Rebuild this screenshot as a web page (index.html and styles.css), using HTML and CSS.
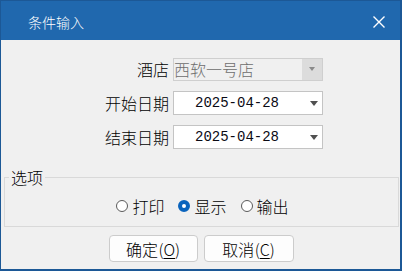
FILE: index.html
```html
<!DOCTYPE html>
<html lang="zh-CN">
<head>
    <meta charset="UTF-8">
    <meta name="viewport" content="width=device-width, initial-scale=1.0">
    <title>条件输入</title>
    <link rel="stylesheet" href="styles.css">
</head>
<body>
    <div class="window">
        <div class="titlebar">
            <span class="title">条件输入</span>
            <svg class="close" width="12" height="12" viewBox="0 0 12 12">
                <path d="M0.5 0.5 L11.5 11.5 M11.5 0.5 L0.5 11.5" stroke="#fff" stroke-width="1.4" fill="none"/>
            </svg>
        </div>

        <div class="content">
            <div class="field">
                <label class="field-label">酒店</label>
                <div class="combo disabled">
                    <span class="combo-text">西软一号店</span>
                    <span class="combo-btn"><i class="arrow"></i></span>
                </div>
            </div>
            <div class="field">
                <label class="field-label">开始日期</label>
                <div class="combo">
                    <span class="combo-text date">2025-04-28</span>
                    <span class="combo-btn"><i class="arrow"></i></span>
                </div>
            </div>
            <div class="field">
                <label class="field-label">结束日期</label>
                <div class="combo">
                    <span class="combo-text date">2025-04-28</span>
                    <span class="combo-btn"><i class="arrow"></i></span>
                </div>
            </div>

            <fieldset class="options">
                <legend>选项</legend>
                <div class="radios">
                    <label class="radio"><span class="dot"></span>打印</label>
                    <label class="radio checked"><span class="dot"></span>显示</label>
                    <label class="radio"><span class="dot"></span>输出</label>
                </div>
            </fieldset>

            <div class="buttons">
                <button class="btn btn-ok">确定 (<u>O</u>)</button>
                <button class="btn btn-cancel">取消 (<u>C</u>)</button>
            </div>
        </div>
    </div>
</body>
</html>
```

FILE: styles.css
```css
html, body {
    margin: 0;
    padding: 0;
}

body {
    width: 402px;
    height: 271px;
    overflow: hidden;
    font-family: "Noto Sans CJK SC", "Noto Sans", sans-serif;
    font-weight: 300;
    color: #000;
}

.window {
    box-sizing: border-box;
    width: 402px;
    height: 271px;
    border-style: solid;
    border-color: #1c5896;
    border-width: 1px 2px 2px 1px;
    background-color: #f0f0f0;
    display: flex;
    flex-direction: column;
}

.titlebar {
    height: 39px;
    background-color: #2068ae;
    display: flex;
    align-items: center;
    padding: 0 15px 0 27px;
    color: #fff;
}

.title {
    flex: 1;
    font-size: 14px;
    line-height: 16px;
    margin-top: 2px;
}

.close {
    display: block;
    margin-top: 2px;
}

.content {
    flex: 1;
    display: flex;
    flex-direction: column;
    padding-top: 17px;
}

.field {
    display: flex;
    align-items: center;
    height: 24px;
    margin-bottom: 9px;
}

.field + .field {
    margin-top: 1px;
}

.field-label {
    width: 168px;
    text-align: right;
    font-size: 16px;
    line-height: 20px;
    margin-right: 4px;
}

.combo {
    box-sizing: border-box;
    width: 150px;
    height: 24px;
    border: 1px solid #c4c4c4;
    background-color: #fff;
    display: flex;
    align-items: center;
}

.combo.disabled {
    height: 23px;
    background-color: #f0f0f0;
    border-color: #cfcfcf;
}

.combo-text {
    flex: 1;
    font-size: 16px;
    line-height: 20px;
    white-space: nowrap;
}

.disabled .combo-text {
    color: #6d6d6d;
}

.combo-text.date {
    font-family: "Liberation Mono", monospace;
    font-size: 14px;
    padding-left: 21px;
    color: #0a0a14;
}

.combo-btn {
    width: 20px;
    align-self: stretch;
    display: flex;
    align-items: center;
    justify-content: center;
}

.disabled .combo-btn {
    background-color: #dcdcdc;
}

.arrow {
    width: 0;
    height: 0;
    border-left: 4.5px solid transparent;
    border-right: 4.5px solid transparent;
    border-top: 5px solid #505050;
    margin-left: 4px;
}

.disabled .arrow {
    border-left-width: 3.5px;
    border-right-width: 3.5px;
    border-top: 4px solid #8a8a8a;
    margin-left: 0;
}

.options {
    margin: 9px 1px 0 3px;
    padding: 0 0 10px 0;
    border: 1px solid #d9d9d9;
}

.options legend {
    margin-left: 4px;
    padding: 0 2px;
    font-size: 16px;
    line-height: 20px;
}

.radios {
    display: flex;
    justify-content: center;
    gap: 14px;
    padding-top: 9px;
    padding-left: 2px;
}

.radio {
    display: flex;
    align-items: center;
    gap: 4px;
    font-size: 16px;
    line-height: 20px;
}

.dot {
    box-sizing: border-box;
    width: 12px;
    height: 12px;
    border-radius: 50%;
    border: 1px solid #5a5a5a;
    background-color: #fff;
}

.radio.checked .dot {
    border: 4px solid #0a64bd;
}

.buttons {
    display: flex;
    justify-content: center;
    gap: 6px;
    margin-top: 8px;
    padding-left: 1px;
}

.btn {
    box-sizing: border-box;
    height: 27px;
    border: 1px solid #cccccc;
    border-radius: 4px;
    background-color: #fdfdfd;
    font-family: "Noto Sans CJK SC", "Noto Sans", sans-serif;
    font-weight: 300;
    font-size: 16px;
    line-height: 20px;
    color: #000;
    padding: 0;
    word-spacing: -3px;
}

.btn-ok {
    width: 89px;
}

.btn-cancel {
    width: 90px;
}

.btn u {
    text-underline-offset: 2px;
}
```
